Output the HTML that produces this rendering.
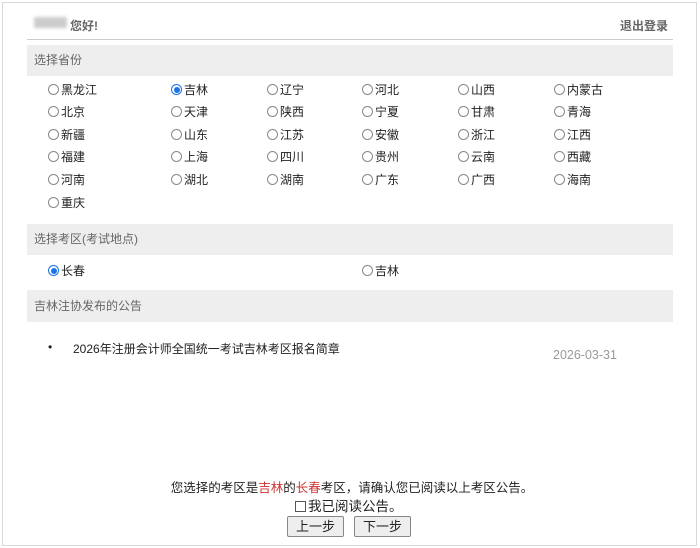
<!DOCTYPE html>
<html><head><meta charset="utf-8"><style>
*{margin:0;padding:0;box-sizing:border-box}
body{width:700px;height:548px;background:#fff;font-family:"Liberation Sans","Noto Sans CJK SC",sans-serif;font-size:12px;color:#222;position:relative;overflow:hidden}
.a{position:absolute;white-space:nowrap}
.frame{position:absolute;left:2px;top:2px;width:695px;height:544px;border:1px solid #d8d8d8}
.band{position:absolute;left:27px;width:646px;background:#eeeeee;color:#666;font-size:12px;padding-left:7px}
.r{position:absolute;font-size:12px;line-height:14px;color:#222}
.r i{display:inline-block;width:11px;height:11px;border:1px solid #888;border-radius:50%;vertical-align:-1px;margin-right:2px;position:relative}
.r i.on{border-color:#1a73e8}
.r i.on:after{content:"";position:absolute;left:1.5px;top:1.5px;width:6px;height:6px;border-radius:50%;background:#1a73e8}
.btn{position:absolute;top:516px;height:21px;width:57px;border:1px solid #888;background:#eee;font-size:13px;text-align:center;line-height:19px;border-radius:2px}
</style></head><body>
<div class="frame"></div>
<div class="a" style="left:34px;top:17px;width:33px;height:11px;background:#ccc;border-radius:2px;filter:blur(1.5px)"></div>
<div class="a" style="left:70px;top:17px;font-size:12px;color:#666;font-weight:bold">您好!</div>
<div class="a" style="left:620px;top:17px;font-size:12px;color:#666;font-weight:bold">退出登录</div>
<div class="a" style="left:27px;top:39px;width:646px;height:1px;background:#ccc"></div>
<div class="band" style="top:45px;height:31px;line-height:31px">选择省份</div>
<div class="band" style="top:224px;height:31px;line-height:31px">选择考区(考试地点)</div>
<div class="band" style="top:290px;height:32px;line-height:32px">吉林注协发布的公告</div>

<div class="r" style="left:48px;top:83px"><i></i>黑龙江</div>
<div class="r" style="left:171px;top:83px"><i class="on"></i>吉林</div>
<div class="r" style="left:267px;top:83px"><i></i>辽宁</div>
<div class="r" style="left:362px;top:83px"><i></i>河北</div>
<div class="r" style="left:458px;top:83px"><i></i>山西</div>
<div class="r" style="left:554px;top:83px"><i></i>内蒙古</div>

<div class="r" style="left:48px;top:105px"><i></i>北京</div>
<div class="r" style="left:171px;top:105px"><i></i>天津</div>
<div class="r" style="left:267px;top:105px"><i></i>陕西</div>
<div class="r" style="left:362px;top:105px"><i></i>宁夏</div>
<div class="r" style="left:458px;top:105px"><i></i>甘肃</div>
<div class="r" style="left:554px;top:105px"><i></i>青海</div>

<div class="r" style="left:48px;top:128px"><i></i>新疆</div>
<div class="r" style="left:171px;top:128px"><i></i>山东</div>
<div class="r" style="left:267px;top:128px"><i></i>江苏</div>
<div class="r" style="left:362px;top:128px"><i></i>安徽</div>
<div class="r" style="left:458px;top:128px"><i></i>浙江</div>
<div class="r" style="left:554px;top:128px"><i></i>江西</div>

<div class="r" style="left:48px;top:150px"><i></i>福建</div>
<div class="r" style="left:171px;top:150px"><i></i>上海</div>
<div class="r" style="left:267px;top:150px"><i></i>四川</div>
<div class="r" style="left:362px;top:150px"><i></i>贵州</div>
<div class="r" style="left:458px;top:150px"><i></i>云南</div>
<div class="r" style="left:554px;top:150px"><i></i>西藏</div>

<div class="r" style="left:48px;top:173px"><i></i>河南</div>
<div class="r" style="left:171px;top:173px"><i></i>湖北</div>
<div class="r" style="left:267px;top:173px"><i></i>湖南</div>
<div class="r" style="left:362px;top:173px"><i></i>广东</div>
<div class="r" style="left:458px;top:173px"><i></i>广西</div>
<div class="r" style="left:554px;top:173px"><i></i>海南</div>

<div class="r" style="left:48px;top:196px"><i></i>重庆</div>

<div class="r" style="left:48px;top:264px"><i class="on"></i>长春</div>
<div class="r" style="left:362px;top:264px"><i></i>吉林</div>

<div class="a" style="left:48px;top:340px;font-size:12px">•</div>
<div class="a" style="left:73px;top:340px;font-size:12px">2026年注册会计师全国统一考试吉林考区报名简章</div>
<div class="a" style="left:553px;top:348px;font-size:12.5px;color:#999">2026-03-31</div>

<div class="a" style="left:0;width:700px;text-align:center;top:477px;font-size:12.5px;padding-left:4px">您选择的考区是<span style="color:#c33">吉林</span>的<span style="color:#c33">长春</span>考区，请确认您已阅读以上考区公告。</div>
<div class="a" style="left:295px;top:495px;font-size:13.5px"><span style="display:inline-block;width:11px;height:11px;border:1px solid #555;vertical-align:-1px;margin-right:2px"></span>我已阅读公告。</div>
<div class="btn" style="left:287px">上一步</div>
<div class="btn" style="left:354px">下一步</div>
</body></html>
